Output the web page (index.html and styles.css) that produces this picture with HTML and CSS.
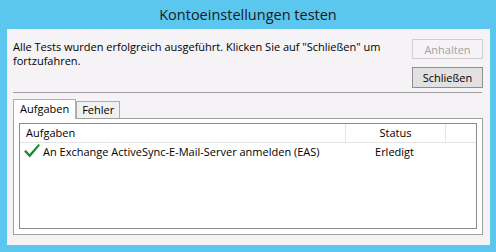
FILE: index.html
```html
<!DOCTYPE html>
<html lang="de">
<head>
  <meta charset="UTF-8">
  <title>Kontoeinstellungen testen</title>
  <link rel="stylesheet" href="styles.css">
</head>
<body>
  <div class="window">
    <div class="titlebar">Kontoeinstellungen testen</div>
    <div class="client">
      <div class="top">
        <p class="message">Alle Tests wurden erfolgreich ausgeführt. Klicken Sie auf "Schließen" um fortzufahren.</p>
        <div class="buttons">
          <button class="btn" disabled>Anhalten</button>
          <button class="btn btn-default">Schließen</button>
        </div>
      </div>
      <div class="separator"></div>
      <div class="tabs">
        <div class="tab active">Aufgaben</div>
        <div class="tab">Fehler</div>
      </div>
      <div class="panel">
        <div class="list">
          <div class="list-head">
            <div class="col col-task">Aufgaben</div>
            <div class="col col-status">Status</div>
            <div class="col col-rest"></div>
          </div>
          <div class="list-row">
            <div class="col col-task">
              <svg class="check" width="18" height="16" viewBox="0 0 18 16">
                <path d="M1 8.5 L3 7 L6.5 11 L15.5 1 L17 2.2 L6.8 14.5 Z" fill="#1f8a2a"/>
              </svg>
              An Exchange ActiveSync-E-Mail-Server anmelden (EAS)
            </div>
            <div class="col col-status">Erledigt</div>
            <div class="col col-rest"></div>
          </div>
        </div>
      </div>
    </div>
  </div>
</body>
</html>
```

FILE: styles.css
```css
body {
  margin: 0;
  background: #5bc7ef;
  font-family: 'Open Sans', 'Noto Sans', Arial, sans-serif;
  color: #000;
}
.window {
  width: 496px;
  height: 252px;
}
.titlebar {
  height: 29px;
  line-height: 30px;
  text-align: center;
  font-size: 14.5px;
  color: #1a1a1a;
}
.client {
  margin: 0 6px 0 7px;
  height: 216px;
  background: #f5f3f6;
  font-size: 11px;
  overflow: hidden;
}
.top {
  display: flex;
  justify-content: space-between;
  padding: 0 7px 0 6px;
  height: 59px;
}
.message {
  margin: 11px 0 0 0;
  width: 380px;
  line-height: 14px;
}
.buttons {
  display: flex;
  flex-direction: column;
  gap: 8px;
  margin-top: 10px;
}
.btn {
  width: 71px;
  height: 20px;
  padding: 0;
  font-family: inherit;
  font-size: 11px;
  color: #000;
  background: #e1e1e1;
  border: 1px solid #adadad;
}
.btn:disabled {
  color: #a3a3a3;
  background: #f5f3f6;
  border-color: #cfcfcf;
}
.btn-default {
  height: 21px;
  border-color: #8f8f8f;
}
.separator {
  margin: 4px 8px 0 6px;
  border-top: 1px solid #a0a0a0;
}
.tabs {
  display: flex;
  align-items: flex-end;
  margin: 6px 0 0 6px;
  height: 19px;
}
.tab {
  height: 16px;
  line-height: 15px;
  padding: 0 5px;
  border: 1px solid #adadad;
  border-bottom: none;
  background: #f0f0f0;
}
.tab.active {
  height: 19px;
  line-height: 18px;
  padding: 0 6px;
  background: #fff;
  margin-bottom: -1px;
  position: relative;
  z-index: 1;
}
.panel {
  margin: 0 7px 0 6px;
  height: 106px;
  padding: 4px 5px 5px 5px;
  background: #fff;
  border: 1px solid #a0a0a0;
}
.list {
  height: 104px;
  background: #fff;
  border: 1px solid #8c8c8c;
}
.list-head {
  display: flex;
  height: 18px;
  line-height: 18px;
  border-bottom: 1px solid #e5e5e5;
}
.list-head .col {
  border-right: 1px solid #e5e5e5;
}
.list-head .col-rest {
  border-right: none;
}
.list-row {
  display: flex;
  height: 18px;
  line-height: 18px;
}
.col-task {
  width: 319px;
  padding-left: 6px;
  display: flex;
  align-items: center;
}
.list-row .col-task {
  padding-left: 3px;
  width: 322px;
}
.col-status {
  width: 99px;
  text-align: center;
}
.col-rest {
  flex: 1;
}
.check {
  margin-right: 2px;
  margin-top: -3px;
}
```
